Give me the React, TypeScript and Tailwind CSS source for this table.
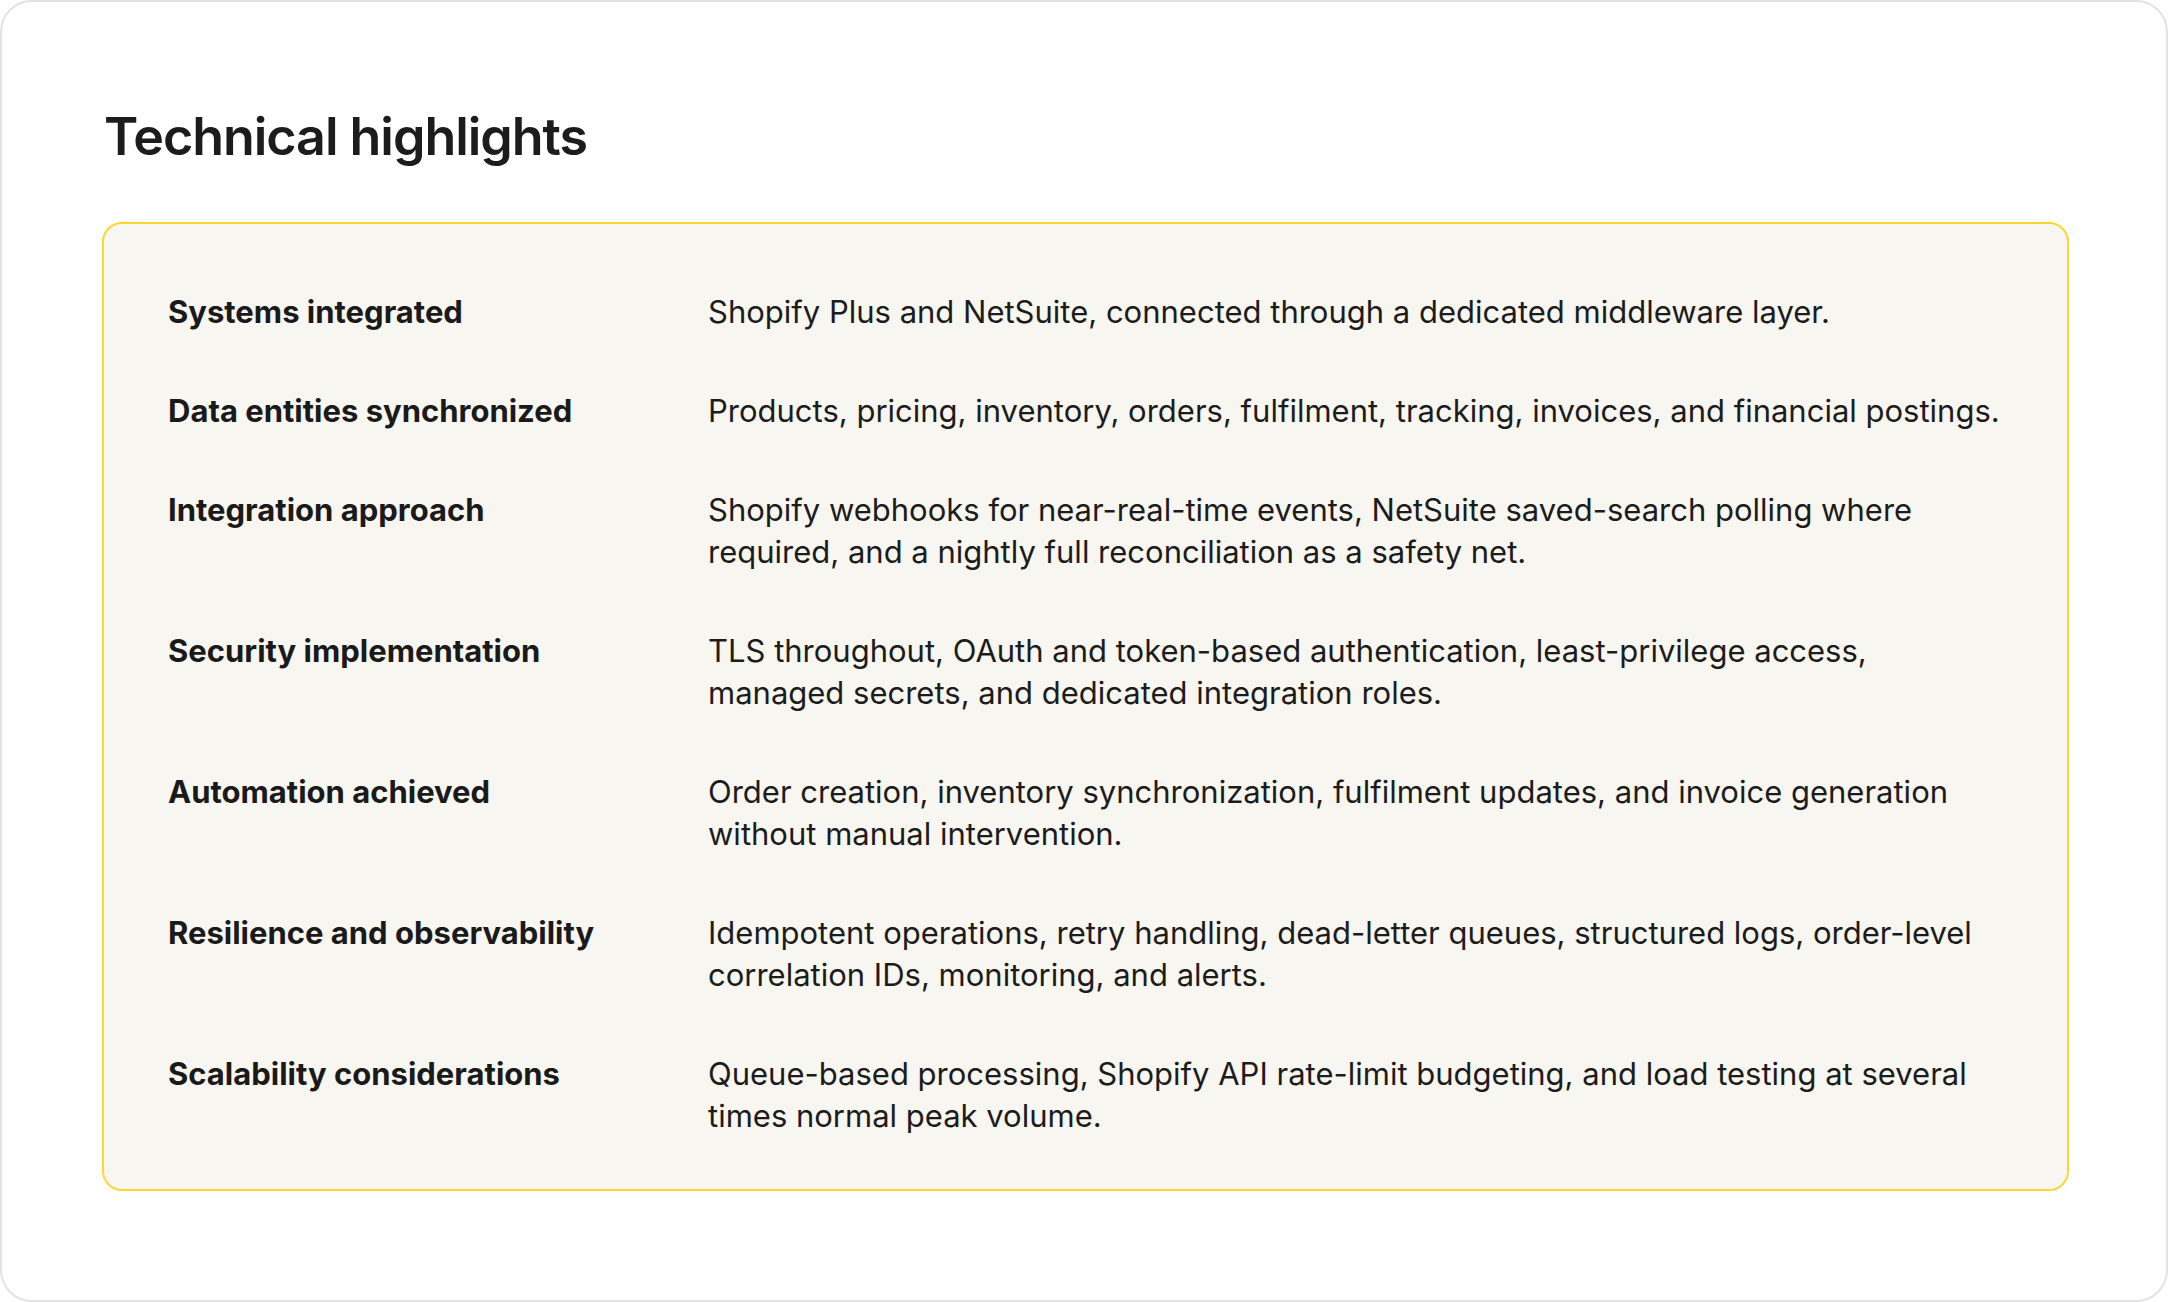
const rows: { label: string; lines: string[] }[] = [
  {
    label: 'Systems integrated',
    lines: ['Shopify Plus and NetSuite, connected through a dedicated middleware layer.'],
  },
  {
    label: 'Data entities synchronized',
    lines: ['Products, pricing, inventory, orders, fulfilment, tracking, invoices, and financial postings.'],
  },
  {
    label: 'Integration approach',
    lines: [
      'Shopify webhooks for near-real-time events, NetSuite saved-search polling where',
      'required, and a nightly full reconciliation as a safety net.',
    ],
  },
  {
    label: 'Security implementation',
    lines: [
      'TLS throughout, OAuth and token-based authentication, least-privilege access,',
      'managed secrets, and dedicated integration roles.',
    ],
  },
  {
    label: 'Automation achieved',
    lines: [
      'Order creation, inventory synchronization, fulfilment updates, and invoice generation',
      'without manual intervention.',
    ],
  },
  {
    label: 'Resilience and observability',
    lines: [
      'Idempotent operations, retry handling, dead-letter queues, structured logs, order-level',
      'correlation IDs, monitoring, and alerts.',
    ],
  },
  {
    label: 'Scalability considerations',
    lines: [
      'Queue-based processing, Shopify API rate-limit budgeting, and load testing at several',
      'times normal peak volume.',
    ],
  },
]

export default function App() {
  return (
    <div className="h-[1302px] w-full bg-white font-['Inter','Liberation_Sans',sans-serif] text-[#1c1c1c]">
      <div className="h-full rounded-[32px] border-2 border-[#e2e2e2] pl-[100px] pr-[97px] pt-[104px]">
        {/* Section title */}
        <h1 className="ml-[2px] text-[52px] font-semibold leading-[1.2] tracking-[-0.02em]">Technical highlights</h1>

        {/* Highlights card */}
        <div className="mt-[54px] rounded-[20px] border-2 border-[#fdd631] bg-[#f8f6f0] px-[64px] pt-[67px] pb-[52px]">
          <dl className="grid grid-cols-[540px_1fr] gap-y-[57px] text-[31px] leading-[42px]">
            {rows.map((row) => (
              <div key={row.label} className="contents">
                <dt className="font-bold text-[#1a1a1a]">{row.label}</dt>
                <dd className="text-[#1c1c1c]">
                  {row.lines.map((line) => (
                    <span key={line} className="block whitespace-nowrap">
                      {line}
                    </span>
                  ))}
                </dd>
              </div>
            ))}
          </dl>
        </div>
      </div>
    </div>
  )
}
